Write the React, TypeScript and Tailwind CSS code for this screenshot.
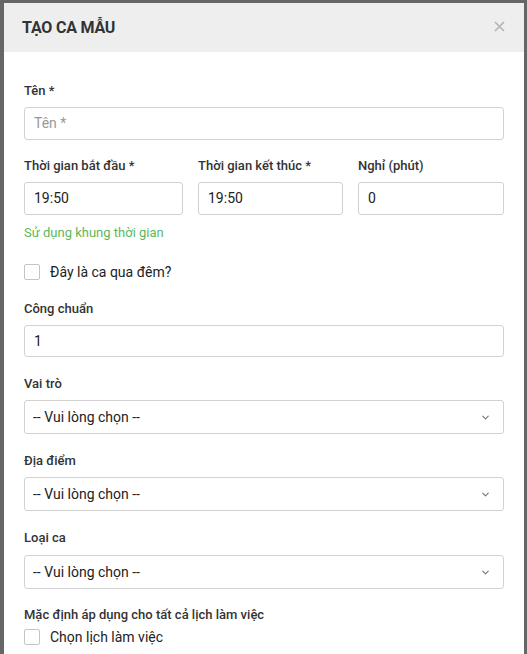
import { ChevronDown } from "lucide-react";

const font = { fontFamily: "Roboto, 'Noto Sans', sans-serif" };

function Label({ children, className = "" }: { children: React.ReactNode; className?: string }) {
  return (
    <div className={`h-[18px] text-[13px] leading-[18px] font-medium text-[#333] ${className}`}>
      {children}
    </div>
  );
}

function TextBox({ value, placeholder, h = "h-[33px]" }: { value?: string; placeholder?: string; h?: string }) {
  return (
    <div
      className={`${h} flex items-center rounded-[3px] border border-[#d2d2d2] bg-white px-[9px] text-[14px] ${
        value ? "text-[#222]" : "text-[#999]"
      }`}
    >
      {value ?? placeholder}
    </div>
  );
}

function SelectBox() {
  return (
    <div className="flex h-[34px] items-center justify-between rounded-[3px] border border-[#d2d2d2] bg-white pl-[8px] pr-[12px] text-[14px] text-[#222]">
      <span>-- Vui lòng chọn --</span>
      <ChevronDown className="h-[11px] w-[11px] text-[#777]" strokeWidth={2.5} />
    </div>
  );
}

function Checkbox({ label }: { label: string }) {
  return (
    <div className="flex h-[18px] items-center gap-[10px]">
      <div className="h-[16px] w-[16px] rounded-[2px] border border-[#c4c4c4] bg-white" />
      <span className="text-[14px] text-[#222]">{label}</span>
    </div>
  );
}

export default function App() {
  return (
    <div className="h-[654px] overflow-hidden bg-[#666] pl-[4px] pt-[3px]" style={font}>
      <div className="w-[520px] bg-white">
        <div className="flex h-[49px] items-center justify-between bg-[#eeeeee] pl-[18px] pr-[19px]">
          <h2 className="text-[16px] font-bold tracking-[-0.2px] text-[#333]">TẠO CA MẪU</h2>
          <svg width="11" height="11" viewBox="0 0 11 11" className="mt-[-2px]">
            <path d="M1 1L10 10M10 1L1 10" stroke="#b3b3b3" strokeWidth="1.6" />
          </svg>
        </div>

        <div className="pb-[40px] pl-[20px] pr-[20px] pt-[30px]">
          <Label className="mb-[7px]">Tên *</Label>
          <TextBox placeholder="Tên *" />

          <div className="mt-[17px] grid grid-cols-[159px_145px_1fr] gap-x-[15px]">
            <div>
              <Label className="mb-[7px]">Thời gian bắt đầu *</Label>
              <TextBox value="19:50" />
            </div>
            <div>
              <Label className="mb-[7px]">Thời gian kết thúc *</Label>
              <TextBox value="19:50" />
            </div>
            <div>
              <Label className="mb-[7px]">Nghỉ (phút)</Label>
              <TextBox value="0" />
            </div>
          </div>

          <div className="mt-[9px] h-[18px] text-[13px] leading-[18px] text-[#5cb85c]">Sử dụng khung thời gian</div>

          <div className="mt-[21px]">
            <Checkbox label="Đây là ca qua đêm?" />
          </div>

          <Label className="mb-[7px] mt-[19px]">Công chuẩn</Label>
          <TextBox value="1" h="h-[32px]" />

          <Label className="mb-[7px] mt-[18px]">Vai trò</Label>
          <SelectBox />

          <Label className="mb-[7px] mt-[18px]">Địa điểm</Label>
          <SelectBox />

          <Label className="mb-[8px] mt-[18px]">Loại ca</Label>
          <SelectBox />

          <Label className="mt-[17px]">Mặc định áp dụng cho tất cả lịch làm việc</Label>
          <div className="mt-[4px]">
            <Checkbox label="Chọn lịch làm việc" />
          </div>
        </div>
      </div>
    </div>
  );
}
